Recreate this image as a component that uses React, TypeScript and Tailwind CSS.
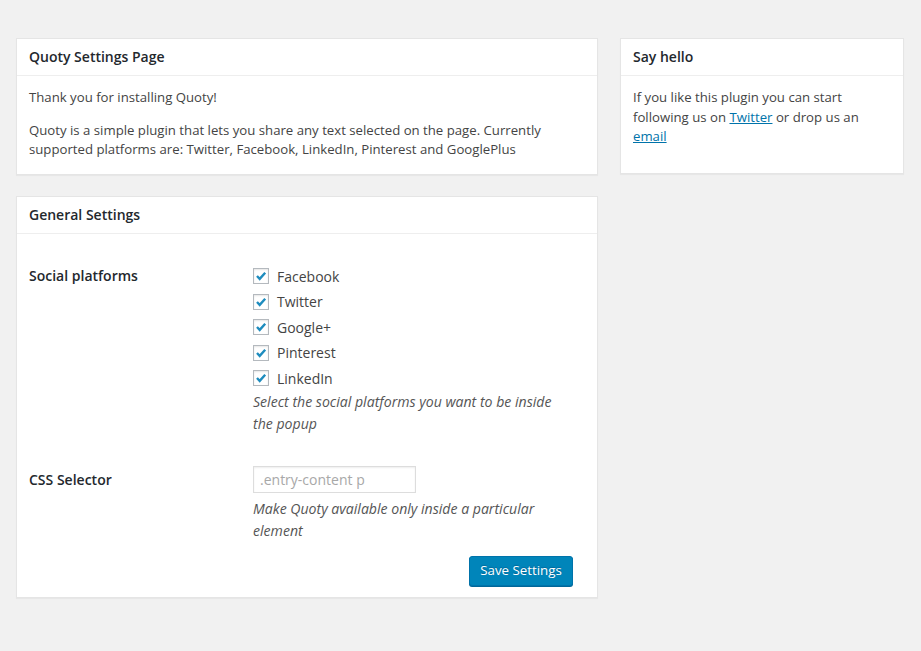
const platforms = ["Facebook", "Twitter", "Google+", "Pinterest", "LinkedIn"];

function Panel({ title, children }: { title: string; children: React.ReactNode }) {
  return (
    <div className="border border-[#e5e5e5] bg-white shadow-[0_1px_1px_rgba(0,0,0,0.04)]">
      <h2 className="border-b border-[#eeeeee] px-3 py-2 text-[14px] font-semibold leading-[20px] text-[#23282d]">
        {title}
      </h2>
      {children}
    </div>
  );
}

function Checkbox({ label }: { label: string }) {
  return (
    <label className="flex h-[25.5px] items-center gap-2 text-[14px] text-[#444]">
      <span className="flex h-4 w-4 items-center justify-center border border-[#b4b9be] bg-white shadow-[inset_0_1px_2px_rgba(0,0,0,0.1)]">
        <svg viewBox="0 0 16 16" className="h-4 w-4">
          <path
            d="M3.4 8 L6.5 11.3 L12.8 4.2"
            fill="none"
            stroke="#1e8cbe"
            strokeWidth="2.7"
            strokeLinecap="butt"
            strokeLinejoin="miter"
          />
        </svg>
      </span>
      {label}
    </label>
  );
}

export default function App() {
  return (
    <main
      className="min-h-[651px] bg-[#f1f1f1] pt-[38px] text-[#444]"
      style={{ fontFamily: '"Open Sans", "Noto Sans", sans-serif' }}
    >
      <div className="flex items-start gap-[22px] pl-4">
        <div className="flex w-[582px] flex-col gap-[21px]">
          <Panel title="Quoty Settings Page">
            <div className="space-y-[13px] px-3 pb-[14px] pt-3 text-[13.2px] leading-[19.5px]">
              <p>Thank you for installing Quoty!</p>
              <p>
                Quoty is a simple plugin that lets you share any text selected on the page. Currently
                supported platforms are: Twitter, Facebook, LinkedIn, Pinterest and GooglePlus
              </p>
            </div>
          </Panel>

          <Panel title="General Settings">
            <div className="px-3 pb-[11px] pt-[30px]">
              <div className="grid grid-cols-[224px_1fr]">
                <div className="text-[14px] font-semibold leading-[24px] text-[#23282d]">Social platforms</div>
                <div>
                  {platforms.map((p) => (
                    <Checkbox key={p} label={p} />
                  ))}
                  <p className="w-[310px] text-[14.1px] italic leading-[22px] text-[#555]">
                    Select the social platforms you want to be inside the popup
                  </p>
                </div>
              </div>

              <div className="mt-[31px] grid grid-cols-[224px_1fr]">
                <div className="text-[14px] font-semibold leading-[27px] text-[#23282d]">CSS Selector</div>
                <div>
                  <input
                    type="text"
                    placeholder=".entry-content p"
                    className="h-[27px] w-[163px] border border-[#dddddd] bg-white px-[6px] text-[14px] shadow-[inset_0_1px_2px_rgba(0,0,0,0.07)] outline-none placeholder:text-[#a8a8a8]"
                  />
                  <p className="mt-[5px] w-[310px] text-[14.1px] italic leading-[22px] text-[#555]">
                    Make Quoty available only inside a particular element
                  </p>
                </div>
              </div>

              <div className="mt-[14px] flex justify-end pr-[12px]">
                <button className="h-[30px] w-[104px] rounded-[3px] border border-[#0073aa] bg-[#0085ba] text-[13.3px] text-white shadow-[0_1px_0_#006799] [text-shadow:0_-1px_1px_#006799]">
                  Save Settings
                </button>
              </div>
            </div>
          </Panel>
        </div>

        <div className="w-[284px]">
          <Panel title="Say hello">
            <div className="px-3 pb-[26px] pt-3 text-[13.2px] leading-[19.5px]">
              <p>
                If you like this plugin you can start following us on{" "}
                <a href="#" className="text-[#0073aa] underline">
                  Twitter
                </a>{" "}
                or drop us an{" "}
                <a href="#" className="text-[#0073aa] underline">
                  email
                </a>
              </p>
            </div>
          </Panel>
        </div>
      </div>
    </main>
  );
}
